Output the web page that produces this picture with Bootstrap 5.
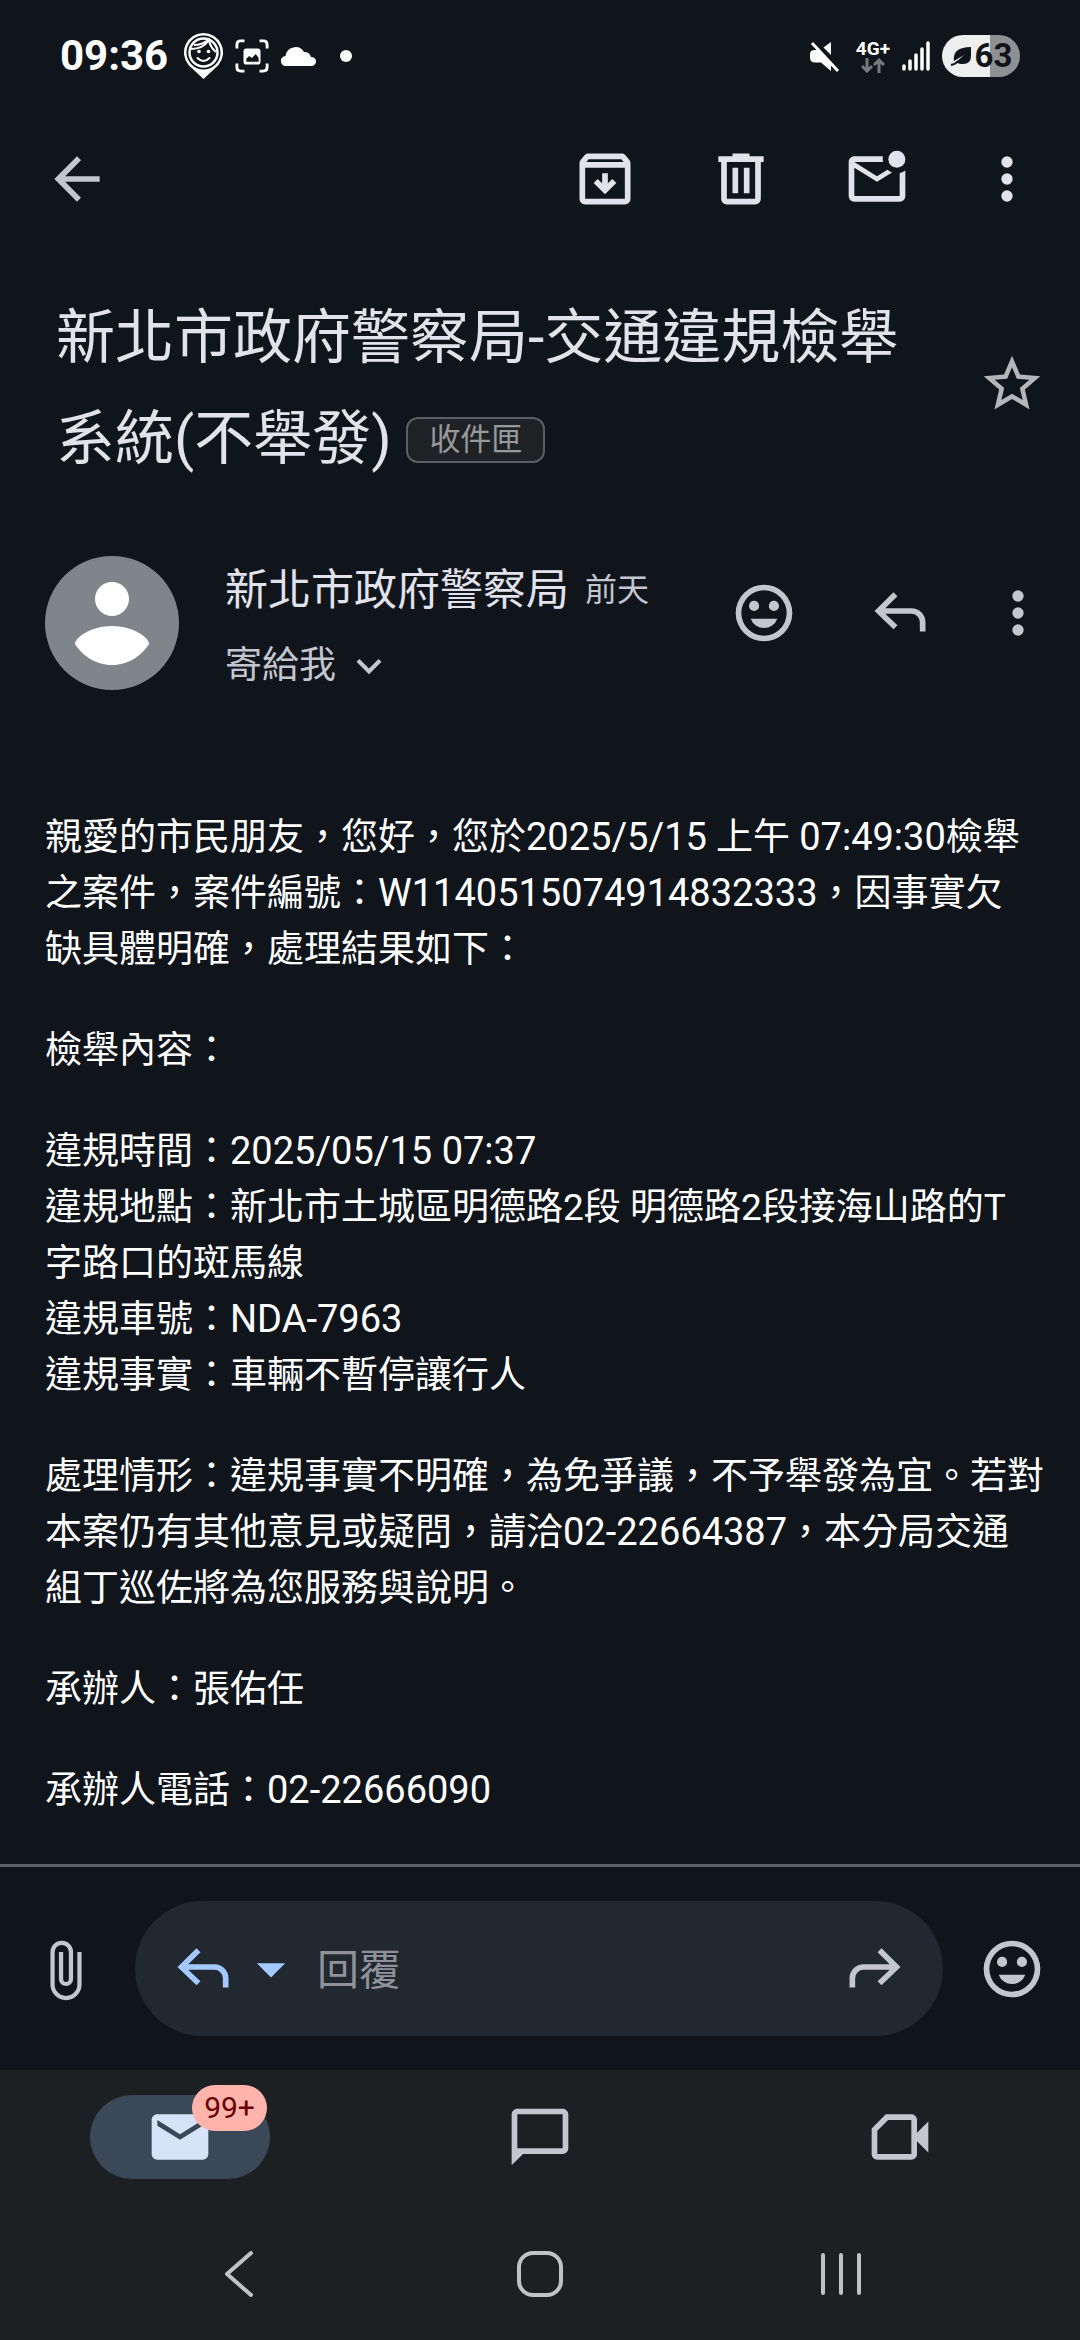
<!DOCTYPE html>
<html lang="zh-Hant">
<head>
<meta charset="utf-8">
<meta name="viewport" content="width=device-width, initial-scale=1">
<title>新北市政府警察局-交通違規檢舉系統</title>
<link href="https://cdn.jsdelivr.net/npm/bootstrap@5.3.0/dist/css/bootstrap.min.css" rel="stylesheet">
<style>
  :root { --page: #10141b; --bar: #1d2023; --icon: #c3c6cf; --bright: #e1e2ec; }
  body { background: var(--page); color: #fff; font-family: Roboto, "Noto Sans CJK TC", sans-serif; }
  svg { display: block; flex: none; fill: currentColor; }
  .bare { background: none; border: 0; padding: 0; color: inherit; display: block; line-height: 1; }
  .i68 { width: 68px; height: 68px; }
  .soft { color: var(--icon); }
  .status { height: 112px; padding: 0 60px; }
  .clock { font-size: 42px; font-weight: 700; line-height: 48px; }
  .notices { gap: 12px; }
  .net { font-size: 19px; font-weight: 700; line-height: 18px; }
  .battery { width: 78px; height: 42px; background: linear-gradient(90deg, #eee 62%, #8e9091 62%); color: #10141b; font-size: 33px; font-weight: 700; line-height: 42px; gap: 3px; }
  .toolbar { height: 133px; padding: 0 39px 0 43px; color: var(--bright); }
  .gap-wide { gap: 68px; }
  .gap-mid { gap: 62px; }
  .gap-tight { gap: 50px; }
  .subject { padding: 42px 34px 0 56px; }
  .subject h1 { font-size: 59px; line-height: 101px; font-weight: 400; color: var(--bright); }
  .tag { height: 46px; padding: 0 21px; border: 2px solid #5c5f62; border-radius: 12px; background: #1f2224; color: #97999c; font-size: 31px; line-height: 42px; vertical-align: 9px; }
  .star { color: #b4b6b9; }
  .sender { padding: 53px 28px 0 45px; color: var(--icon); }
  .avatar { width: 134px; height: 134px; }
  .people { padding: 10px 0 0 46px; }
  .who { font-size: 43px; line-height: 76px; color: var(--bright); }
  .when { font-size: 32px; line-height: 76px; }
  .tome { font-size: 37px; line-height: 76px; }
  .actions { margin-bottom: 20px; }
  .letter { padding: 106px 30px 40px 45px; font-size: 37px; line-height: 56px; }
  .letter p { margin-bottom: 45px; }
  .num { font-size: 38px; line-height: 1; }
  .replybar { border-top: 3px solid #5d6168; height: 206px; color: var(--icon); padding: 0 34px 0 32px; gap: 35px; }
  .pill { height: 135px; min-width: 0; background: #222830; padding: 0 34px; }
  .pill input { width: 0; font-size: 42px; line-height: 60px; color: #fff; outline: 0; min-width: 0; padding: 4px 0 0 12px; }
  .pill input::placeholder { color: #8f9399; opacity: 1; }
  .blue { color: #a4c9fe; }
  .tabs { background: var(--bar); color: var(--icon); height: 134px; }
  .tab-pill { width: 180px; height: 84px; }
  .tab-on { background: #3b4858; color: #d7e3f8; }
  .count { left: 102px; top: -10px; width: 75px; height: 46px; background: #ffb4ab; color: #690005; font-size: 30px; font-weight: 400; line-height: 46px; }
  .sysnav { background: var(--bar); color: #c0c2c4; padding: 4px 88px 0; height: 136px; }
</style>
<script src="https://cdn.jsdelivr.net/npm/bootstrap@5.3.0/dist/js/bootstrap.bundle.min.js"></script>
</head>
<body>
<div class="d-flex flex-column min-vh-100">

  <div class="status d-flex align-items-center justify-content-between">
    <div class="d-flex align-items-center notices">
      <span class="clock">09:36</span>
      <svg class="ms-1" width="39" height="46" viewBox="0 0 39 46"><path fill-rule="evenodd" d="M19.500 0a19.500 19.500 0 0 0-15 32L19.500 46 34.500 32a19.500 19.500 0 0 0-15-32zm0 2.500a17 17 0 1 1 0 34 17 17 0 0 1 0-34z"/><circle cx="19.500" cy="19.500" r="14" fill="none" stroke="currentColor" stroke-width="2.500"/><path d="M7 16q12 0 18-9 1 7 7 12M10 12q8 0 14-5" fill="none" stroke="currentColor" stroke-width="2"/><circle cx="15" cy="18.500" r="1.800"/><circle cx="24.500" cy="18.500" r="1.800"/><path d="M13.500 25q6 6 12 0" fill="none" stroke="currentColor" stroke-width="2" stroke-linecap="round"/></svg>
      <svg width="34" height="36" viewBox="0 0 36 36"><path d="M2 10V6q0-4 4-4h4M26 2h4q4 0 4 4v4M34 26v4q0 4-4 4h-4M10 34H6q-4 0-4-4v-4" fill="none" stroke="currentColor" stroke-width="3"/><path fill-rule="evenodd" d="M12 10h12q3 0 3 3v11q0 3-3 3H12q-3 0-3-3V13q0-3 3-3zm0 14h13v-4l-3-4-4 4-3-2-3 3z"/></svg>
      <svg width="36" height="22" viewBox="0 0 36 22"><path d="M5 21a5 5 0 0 1-.5-10A10 10 0 0 1 23 7a7 7 0 0 1 7 5 4.500 4.500 0 0 1 1 9z"/></svg>
      <svg class="ms-2" width="16" height="12" viewBox="0 0 16 12"><circle cx="9" cy="6" r="6"/></svg>
    </div>
    <div class="d-flex align-items-center">
      <svg width="31" height="31" viewBox="0 0 31 31"><path d="M3 2 29 30" stroke="currentColor" stroke-width="3"/><path d="M22 1v13L14.500 6.500zM6 9h2.500L22 23v7L12 21.500H6q-5 0-5-5V13q0-4 5-4z"/></svg>
      <div class="ms-3 text-center">
        <div class="net">4G+</div>
        <svg class="mx-auto" width="24" height="15" viewBox="0 0 24 15"><path d="M6 0v13M1 8l5 5 5-5M18 15V2M13 7l5-5 5 5" fill="none" stroke="#77797c" stroke-width="3"/></svg>
      </div>
      <svg class="mx-2 px-1" width="36" height="30" viewBox="0 0 28 30"><path d="M2 25v3M8 20v8M14 14v14M20 8v20M26 2v26" stroke="currentColor" stroke-width="3.500" stroke-linecap="round"/></svg>
      <div class="battery rounded-pill d-flex align-items-center justify-content-center">
        <svg width="22" height="20" viewBox="0 0 22 20"><path d="M21 1v9q0 8-8 8-5 0-7-2l8-7-10 6q-2-14 17-14z"/><path d="M1 19q5-1 7-4" fill="none" stroke="currentColor" stroke-width="2"/></svg>63
      </div>
    </div>
  </div>

  <div class="toolbar d-flex align-items-center justify-content-between">
    <button class="bare soft" aria-label="返回"><svg class="i68" viewBox="0 0 24 24"><path d="M20 11H7.830l5.590-5.590L12 4l-8 8 8 8 1.410-1.410L7.830 13H20z"/></svg></button>
    <div class="d-flex gap-mid">
      <div class="d-flex gap-wide">
        <button class="bare" aria-label="封存"><svg class="i68" viewBox="0 0 24 24"><path d="M20.540 5.230l-1.390-1.680C18.880 3.210 18.470 3 18 3H6c-.47 0-.88.21-1.160.55L3.460 5.230C3.170 5.570 3 6.020 3 6.500V19c0 1.100.9 2 2 2h14c1.100 0 2-.9 2-2V6.500c0-.48-.17-.93-.46-1.270zM6.240 5h11.520l.83 1H5.420l.82-1zM5 19V8h14v11H5zm8-9h-2v3.500l-1.600-1.500L8 13.400l4 4 4-4-1.400-1.400-1.600 1.500z"/></svg></button>
        <button class="bare" aria-label="刪除"><svg class="i68" viewBox="0 0 24 24"><path d="M15 4V3H9v1H4v2h1v13c0 1.100.9 2 2 2h10c1.100 0 2-.9 2-2V6h1V4h-5zm2 15H7V6h10v13zM9 8h2v9H9zm4 0h2v9h-2z"/></svg></button>
        <button class="bare" aria-label="標示為未讀"><svg class="i68" viewBox="0 0 24 24"><path d="M22 8.980V18c0 1.100-.9 2-2 2H4c-1.100 0-2-.9-2-2V6c0-1.100.9-2 2-2h10.100a5 5 0 0 0 0 2H4l8 5 3.670-2.290c.47.43 1.020.76 1.630.98L12 13 4 8v10h16V9.900c.74-.15 1.420-.48 2-.92z"/><circle cx="19" cy="5" r="3"/></svg></button>
      </div>
      <button class="bare" aria-label="更多選項"><svg class="i68" viewBox="0 0 24 24"><path d="M12 8a2 2 0 1 0 0-4 2 2 0 0 0 0 4zm0 2a2 2 0 1 0 0 4 2 2 0 0 0 0-4zm0 6a2 2 0 1 0 0 4 2 2 0 0 0 0-4z"/></svg></button>
    </div>
  </div>

  <div class="subject d-flex align-items-center justify-content-between">
    <h1 class="m-0">新北市政府警察局-交通違規檢舉<br>系統(不舉發) <span class="tag d-inline-block">收件匣</span></h1>
    <button class="bare star mb-2" aria-label="加上星號"><svg class="i68" viewBox="0 0 24 24"><path d="M22 9.240l-7.190-.62L12 2 9.190 8.630 2 9.240l5.460 4.730L5.820 21 12 17.270 18.180 21l-1.630-7.030L22 9.240zM12 15.400l-3.760 2.270 1-4.280-3.320-2.880 4.380-.38L12 6.100l1.710 4.040 4.380.38-3.320 2.880 1 4.280L12 15.400z"/></svg></button>
  </div>

  <div class="sender d-flex align-items-center">
    <svg class="avatar" viewBox="0 0 134 134"><circle cx="67" cy="67" r="67" fill="#80858b"/><circle cx="67" cy="43" r="17" fill="#fff"/><path d="M67 70c20 0 37 11 37 18-7 11-20 21-37 21s-30-10-37-21c0-7 17-18 37-18z" fill="#fff"/></svg>
    <div class="people flex-grow-1">
      <div class="d-flex"><span class="who">新北市政府警察局</span><span class="when ms-3">前天</span></div>
      <button class="bare tome d-flex align-items-center">寄給我<svg class="ms-2" width="50" height="50" viewBox="0 0 24 24"><path d="M7.410 8.590 12 13.170l4.590-4.580L18 10l-6 6-6-6z"/></svg></button>
    </div>
    <div class="actions d-flex align-items-center gap-tight">
      <div class="d-flex gap-wide">
        <button class="bare" aria-label="新增表情符號回應"><svg class="i68" viewBox="0 0 24 24"><use href="#smile"/></svg></button>
        <button class="bare" aria-label="回覆"><svg class="i68" viewBox="0 0 24 24"><use href="#reply"/></svg></button>
      </div>
      <button class="bare" aria-label="更多選項"><svg class="i68" viewBox="0 0 24 24"><path d="M12 8a2 2 0 1 0 0-4 2 2 0 0 0 0 4zm0 2a2 2 0 1 0 0 4 2 2 0 0 0 0-4zm0 6a2 2 0 1 0 0 4 2 2 0 0 0 0-4z"/></svg></button>
    </div>
  </div>

  <main class="letter flex-grow-1">
    <p>親愛的市民朋友，您好，您於<span class="num">2025/5/15</span> 上午 <span class="num">07:49:30</span>檢舉<br>之案件，案件編號：<span class="num">W1140515074914832333</span>，因事實欠<br>缺具體明確，處理結果如下：</p>
    <p>檢舉內容：</p>
    <p>違規時間：<span class="num">2025/05/15 07:37</span><br>違規地點：新北市土城區明德路2段 明德路2段接海山路的T<br>字路口的斑馬線<br>違規車號：<span class="num">NDA-7963</span><br>違規事實：車輛不暫停讓行人</p>
    <p>處理情形：違規事實不明確，為免爭議，不予舉發為宜。若對<br>本案仍有其他意見或疑問，請洽<span class="num">02-22664387</span>，本分局交通<br>組丁巡佐將為您服務與說明。</p>
    <p>承辦人：張佑任</p>
    <p class="mb-0">承辦人電話：<span class="num">02-22666090</span></p>
  </main>

  <div class="replybar d-flex align-items-center">
    <button class="bare" aria-label="附加檔案"><svg class="i68" viewBox="0 0 24 24"><path d="M17.500 6v11.500a5.500 5.500 0 0 1-11 0V6a4 4 0 0 1 8 0v9.500a2.500 2.500 0 0 1-5 0V6H11v9.500a1 1 0 0 0 2 0V6a2.500 2.500 0 0 0-5 0v11.500a4 4 0 0 0 8 0V6z"/></svg></button>
    <div class="pill rounded-pill d-flex align-items-center flex-grow-1">
      <button class="bare blue" aria-label="回覆"><svg class="i68" viewBox="0 0 24 24"><use href="#reply"/></svg></button>
      <button class="bare blue" aria-label="回覆類型"><svg class="i68" viewBox="0 0 24 24"><path d="m7 10 5 5 5-5z"/></svg></button>
      <input class="bg-transparent border-0 flex-grow-1" type="text" placeholder="回覆" aria-label="回覆">
      <button class="bare" aria-label="轉寄"><svg class="i68" viewBox="0 0 24 24"><g transform="matrix(-1 0 0 1 24 0)"><use href="#reply"/></g></svg></button>
    </div>
    <button class="bare" aria-label="表情符號"><svg class="i68" viewBox="0 0 24 24"><use href="#smile"/></svg></button>
  </div>

  <nav class="tabs row g-0 align-items-center">
    <div class="col d-flex justify-content-center">
      <a href="#" class="tab-pill tab-on rounded-pill position-relative d-flex align-items-center justify-content-center text-decoration-none" aria-label="郵件">
        <svg class="i68" viewBox="0 0 24 24"><path d="M20 4H4c-1.100 0-2 .9-2 2v12c0 1.100.9 2 2 2h16c1.100 0 2-.9 2-2V6c0-1.100-.9-2-2-2zm0 4-8 5-8-5V6l8 5 8-5v2z"/></svg>
        <span class="count position-absolute rounded-pill text-center">99+</span>
      </a>
    </div>
    <div class="col d-flex justify-content-center">
      <a href="#" class="text-reset" aria-label="Chat"><svg class="i68" viewBox="0 0 24 24"><path d="M20 2H4c-1.100 0-2 .9-2 2v18l4-4h14c1.100 0 2-.9 2-2V4c0-1.100-.9-2-2-2zm0 14H4V4h16v12z"/></svg></a>
    </div>
    <div class="col d-flex justify-content-center">
      <a href="#" class="text-reset" aria-label="Meet"><svg class="i68" viewBox="0 0 24 24"><path d="M18 10.500V6c0-1.100-.9-2-2-2H7L2 9v9c0 1.100.9 2 2 2h12c1.100 0 2-.9 2-2v-4.500l4 4v-11l-4 4zM16 18H4V9.800L7.800 6H16v12z"/></svg></a>
    </div>
  </nav>

  <div class="sysnav">
    <div class="row g-0 h-100 align-items-center">
      <div class="col"><button class="bare mx-auto" aria-label="返回"><svg width="48" height="48" viewBox="0 0 48 48"><path d="M36 3 12 24l24 21" fill="none" stroke="currentColor" stroke-width="4" stroke-linecap="round" stroke-linejoin="round"/></svg></button></div>
      <div class="col"><button class="bare mx-auto" aria-label="主畫面"><svg width="48" height="48" viewBox="0 0 48 48"><rect x="3" y="3" width="42" height="42" rx="14" fill="none" stroke="currentColor" stroke-width="4"/></svg></button></div>
      <div class="col"><button class="bare mx-auto" aria-label="最近使用的應用程式"><svg width="48" height="48" viewBox="0 0 48 48"><path d="M6 5v38M24 5v38M42 5v38" stroke="currentColor" stroke-width="4" stroke-linecap="round"/></svg></button></div>
    </div>
  </div>
</div>

<svg class="d-none" aria-hidden="true">
  <defs>
    <path id="reply" d="M21 18.500v-3.200a5 5 0 0 0-5-5H6.800l4.300-4.200-1.400-1.400L3 11.300l6.700 6.400 1.400-1.400L6.800 12.300H16a3 3 0 0 1 3 3v3.200z"/>
    <path id="smile" fill-rule="evenodd" d="M12 2a10 10 0 1 0 0 20 10 10 0 0 0 0-20zm0 18a8 8 0 1 1 0-16 8 8 0 0 1 0 16zM8.500 11.300a1.800 1.800 0 1 0 0-3.600 1.800 1.800 0 0 0 0 3.600zm7 0a1.800 1.800 0 1 0 0-3.600 1.800 1.800 0 0 0 0 3.600zM7.300 14h9.400a5 5 0 0 1-9.400 0z"/>
  </defs>
</svg>
</body>
</html>
